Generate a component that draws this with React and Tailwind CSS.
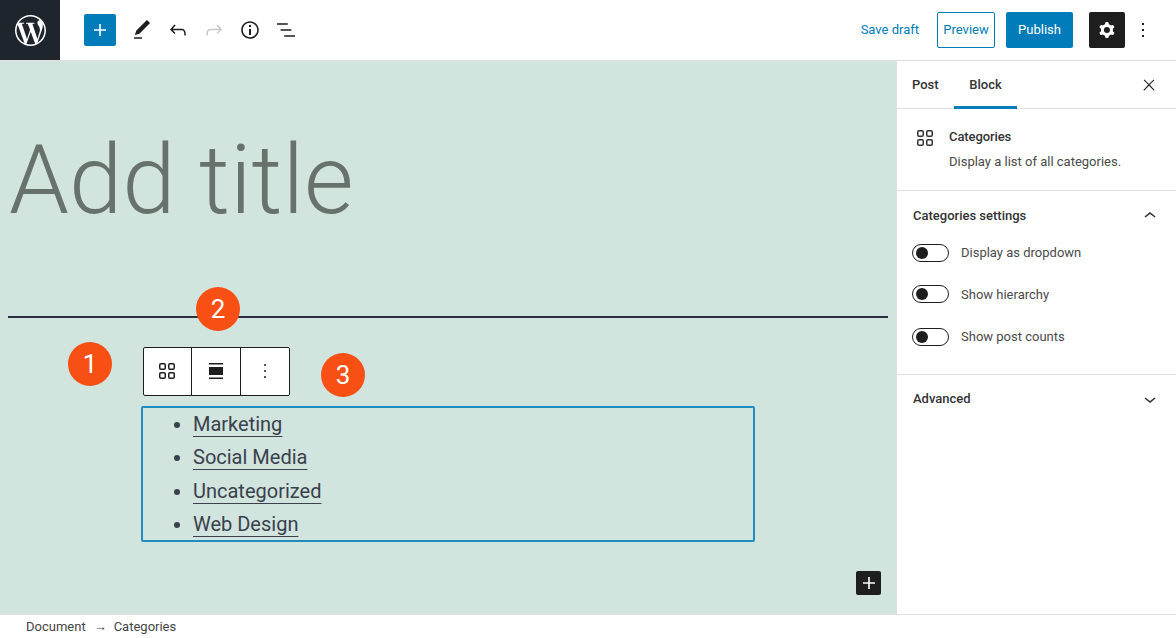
import React from 'react';
import { SiWordpress } from 'react-icons/si';

const paths = {
  plus: 'M18 11.2h-5.2V6h-1.6v5.2H6v1.6h5.2V18h1.6v-5.2H18z',
  pencil: 'M20.1 5.1L16.9 2 6.2 12.7l-1.3 4.4 4.5-1.3L20.1 5.1zM4 20.8h8v-1.5H4v1.5z',
  undo: 'M18.3 11.7c-.6-.6-1.4-.9-2.3-.9H6.7l2.9-3.3-1.1-1-4.5 5L8.5 16l1-1-2.7-2.7H16c.5 0 .9.2 1.3.5 1 1 1 3.4 1 4.5v.3h1.5v-.2c0-1.5 0-4.3-1.5-5.7z',
  redo: 'M15.6 6.5l-1.1 1 2.9 3.3H8c-.9 0-1.7.3-2.3.9-1.4 1.5-1.4 4.2-1.4 5.6v.2h1.5v-.3c0-1.1 0-3.5 1-4.5.3-.3.7-.5 1.3-.5h9.2L14.5 15l1.1 1.1 4.6-4.6-4.6-5z',
  info: 'M12 3.2c-4.8 0-8.8 3.9-8.8 8.8 0 4.8 3.9 8.8 8.8 8.8 4.8 0 8.8-3.9 8.8-8.8 0-4.8-4-8.8-8.8-8.8zm0 16c-4 0-7.2-3.3-7.2-7.2C4.8 8 8 4.8 12 4.8s7.2 3.3 7.2 7.2c0 4-3.2 7.2-7.2 7.2zM11 17h2v-6h-2v6zm0-8h2V7h-2v2z',
  list: 'M13.8 5.2H3v1.5h10.8V5.2zm-3.6 12v1.5H21v-1.5H10.2zm7.2-6H6.6v1.5h10.8v-1.5z',
  cog: 'M10.289 4.836A1 1 0 0111.275 4h1.306a1 1 0 01.987.836l.244 1.466c.787.26 1.503.679 2.108 1.218l1.393-.522a1 1 0 011.216.437l.653 1.13a1 1 0 01-.23 1.273l-1.148.944a6.025 6.025 0 010 2.435l1.149.946a1 1 0 01.23 1.272l-.653 1.13a1 1 0 01-1.216.437l-1.394-.522c-.605.54-1.32.958-2.108 1.218l-.244 1.466a1 1 0 01-.987.836h-1.306a1 1 0 01-.986-.836l-.244-1.466a5.995 5.995 0 01-2.108-1.218l-1.394.522a1 1 0 01-1.217-.436l-.653-1.131a1 1 0 01.23-1.272l1.149-.946a6.026 6.026 0 010-2.435l-1.148-.944a1 1 0 01-.23-1.272l.653-1.131a1 1 0 011.217-.437l1.393.522a5.994 5.994 0 012.108-1.218l.244-1.466zM14.929 12a3 3 0 11-6 0 3 3 0 016 0z',
  more: 'M13 19h-2v-2h2v2zm0-6h-2v-2h2v2zm0-6h-2V5h2v2z',
  close: 'M13 11.8l6.1-6.3-1-1-6.1 6.2-6.1-6.2-1 1 6.1 6.3-6.5 6.7 1 1 6.5-6.6 6.5 6.6 1-1z',
  grid: 'M6 5.5h3a.5.5 0 01.5.5v3a.5.5 0 01-.5.5H6a.5.5 0 01-.5-.5V6a.5.5 0 01.5-.5zM4 6a2 2 0 012-2h3a2 2 0 012 2v3a2 2 0 01-2 2H6a2 2 0 01-2-2V6zm11-.5h3a.5.5 0 01.5.5v3a.5.5 0 01-.5.5h-3a.5.5 0 01-.5-.5V6a.5.5 0 01.5-.5zM13 6a2 2 0 012-2h3a2 2 0 012 2v3a2 2 0 01-2 2h-3a2 2 0 01-2-2V6zm5 8.5h-3a.5.5 0 00-.5.5v3a.5.5 0 00.5.5h3a.5.5 0 00.5-.5v-3a.5.5 0 00-.5-.5zM15 13a2 2 0 00-2 2v3a2 2 0 002 2h3a2 2 0 002-2v-3a2 2 0 00-2-2h-3zm-9 1.5h3a.5.5 0 01.5.5v3a.5.5 0 01-.5.5H6a.5.5 0 01-.5-.5v-3a.5.5 0 01.5-.5zM4 15a2 2 0 012-2h3a2 2 0 012 2v3a2 2 0 01-2 2H6a2 2 0 01-2-2v-3z',
  wide: 'M5 5.5h14V4H5v1.5zM5 20h14v-1.5H5V20zM5 8h14v8H5z',
  up: 'M6.5 12.4L12 8l5.5 4.4-.9 1.2L12 10l-4.5 3.6-1-1.2z',
  down: 'M17.5 11.6L12 16l-5.5-4.4.9-1.2L12 14l4.5-3.6 1 1.2z',
};

function Icon({ name, className = '' }) {
  return (
    <svg viewBox="0 0 24 24" className={`w-6 h-6 fill-current ${className}`}>
      <path d={paths[name]} fillRule="evenodd" clipRule="evenodd" />
    </svg>
  );
}

function Toggle({ label, className = '' }) {
  return (
    <div className={`flex items-center gap-3 -ml-px ${className}`}>
      <div className="w-[37px] h-[18px] rounded-full border border-[#1e1e1e] bg-white flex items-center pl-[3px]">
        <div className="w-3 h-3 rounded-full bg-[#1e1e1e]" />
      </div>
      <span className="text-[13px] text-[#4a4a4a]">{label}</span>
    </div>
  );
}

function Badge({ n, className }) {
  return (
    <div className={`absolute w-11 h-11 rounded-full bg-[#f74f14] text-white text-[26px] flex items-center justify-center ${className}`}>
      {n}
    </div>
  );
}

export default function App() {
  const categories = ['Marketing', 'Social Media', 'Uncategorized', 'Web Design'];

  return (
    <div className="w-[1176px] h-[638px] flex flex-col overflow-hidden bg-white font-['Roboto',sans-serif]">
      <header className="h-[61px] shrink-0 flex items-center border-b border-[#e0e0e0]">
        <div className="w-[60px] h-[60px] bg-[#1e252d] flex items-center justify-center text-white">
          <SiWordpress className="w-[31px] h-[31px]" />
        </div>
        <button className="ml-6 w-8 h-8 rounded-[2px] bg-[#007cba] text-white flex items-center justify-center">
          <Icon name="plus" />
        </button>
        <div className="ml-2 flex text-[#1e1e1e]">
          <div className="w-9 flex justify-center"><Icon name="pencil" /></div>
          <div className="w-9 flex justify-center"><Icon name="undo" /></div>
          <div className="w-9 flex justify-center"><Icon name="redo" className="text-[#c9c9c9]" /></div>
          <div className="w-9 flex justify-center"><Icon name="info" /></div>
          <div className="w-9 flex justify-center"><Icon name="list" /></div>
        </div>
        <div className="ml-auto flex items-center text-[13px]">
          <span className="text-[#007cba]">Save draft</span>
          <button className="ml-[18px] w-[58px] h-9 rounded-[2px] border border-[#007cba] text-[#007cba]">Preview</button>
          <button className="ml-[11px] w-[67px] h-9 rounded-[2px] bg-[#007cba] text-white">Publish</button>
          <button className="ml-4 w-9 h-9 rounded-[2px] bg-[#1e1e1e] text-white flex items-center justify-center">
            <Icon name="cog" />
          </button>
          <div className="w-9 flex justify-center text-[#1e1e1e]"><Icon name="more" /></div>
          <div className="w-[15px]" />
        </div>
      </header>

      <main className="flex-1 min-h-0 flex">
        <section className="relative flex-1 bg-[#d1e4dd] px-2">
          <h1 className="h-[255px] pt-[64px] pl-[1px] text-[96px] leading-[110px] font-light text-[#68726d]">Add title</h1>
          <div className="h-0.5 bg-[#28303d]" />
          <div className="ml-[135px] mt-[29px] w-[147px] h-[49px] flex rounded-[2px] border border-[#1e1e1e] bg-white text-[#1e1e1e]">
            <div className="w-12 flex items-center justify-center pr-px pb-px border-r border-[#1e1e1e]"><Icon name="grid" /></div>
            <div className="w-[49px] flex items-center justify-center pb-px border-r border-[#1e1e1e]"><Icon name="wide" /></div>
            <div className="flex-1 flex items-center justify-center pb-px"><Icon name="more" className="text-[#555]" /></div>
          </div>
          <ul className="ml-[133px] mt-[10px] w-[614px] h-[136px] rounded-[2px] border-2 border-[#1e8cbe] pl-[50px] list-disc text-[20px] leading-[33.3px] text-[#39414d]">
            {categories.map((c) => (
              <li key={c}><span className="underline underline-offset-[5px] decoration-1">{c}</span></li>
            ))}
          </ul>
          <Badge n="1" className="left-[68px] top-[281px]" />
          <Badge n="2" className="left-[196px] top-[226px]" />
          <Badge n="3" className="left-[321px] top-[292px]" />
          <button className="absolute left-[856px] top-[510px] w-[25px] h-6 rounded-[2px] bg-[#1e1e1e] text-white flex items-center justify-center">
            <Icon name="plus" />
          </button>
        </section>

        <aside className="w-[280px] shrink-0 border-l border-[#e0e0e0] text-[#1e1e1e]">
          <div className="h-[48px] flex items-stretch border-b border-[#e0e0e0] text-[13px] font-medium">
            <div className="w-[57px] pl-[15px] flex items-center text-[#333]">Post</div>
            <div className="w-[63px] pt-[3px] flex items-center justify-center border-b-[3px] border-[#007cba] -mb-px text-[#333]">Block</div>
            <div className="ml-auto mr-[18px] flex items-center"><Icon name="close" className="w-[18px] h-[18px]" /></div>
          </div>
          <div className="h-[82px] border-b border-[#e0e0e0] flex pl-4 pt-[17px]">
            <Icon name="grid" className="text-[#333]" />
            <div className="ml-3 text-[13px]">
              <div className="font-medium leading-[24px] -mt-[1px] text-[#333] tracking-[-0.1px]">Categories</div>
              <div className="leading-[24px] mt-px text-[#4a4a4a]">Display a list of all categories.</div>
            </div>
          </div>
          <div className="h-[184px] border-b border-[#e0e0e0] px-4 pt-[13px]">
            <div className="flex items-center justify-between pr-0 text-[13px] font-medium text-[#333]">
              <span>Categories settings</span>
              <Icon name="up" className="-mr-[2px]" />
            </div>
            <Toggle label="Display as dropdown" className="mt-[15px]" />
            <Toggle label="Show hierarchy" className="mt-[22px]" />
            <Toggle label="Show post counts" className="mt-[23px]" />
          </div>
          <div className="flex items-center justify-between px-4 pt-3 text-[13px] font-medium text-[#333]">
            <span>Advanced</span>
            <Icon name="down" className="-mr-[2px]" />
          </div>
        </aside>
      </main>

      <footer className="h-6 shrink-0 border-t border-[#e0e0e0] pl-[26px] flex items-center text-[13px] text-[#444]">
        <span>Document</span>
        <span className="ml-[8px] mr-[9px] w-[11px]">→</span>
        <span>Categories</span>
      </footer>
    </div>
  );
}
